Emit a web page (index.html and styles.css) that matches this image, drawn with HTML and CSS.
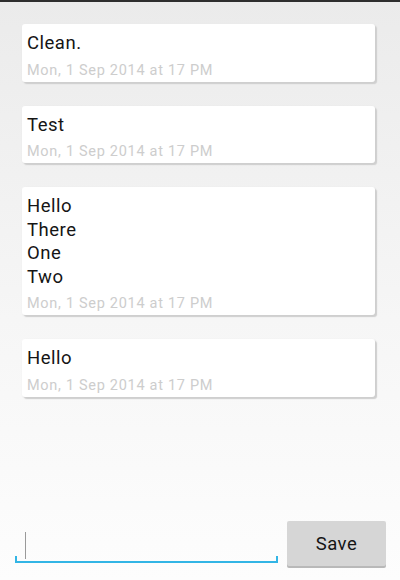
FILE: index.html
```html
<!DOCTYPE html>
<html>
<head>
<meta charset="utf-8">
<link rel="stylesheet" href="styles.css">
</head>
<body>
<div class="app">
  <div class="list">
    <div class="card">
      <div class="title">Clean.</div>
      <div class="date">Mon, 1 Sep 2014 at 17 PM</div>
    </div>
    <div class="card">
      <div class="title">Test</div>
      <div class="date">Mon, 1 Sep 2014 at 17 PM</div>
    </div>
    <div class="card">
      <div class="title">Hello<br>There<br>One<br>Two</div>
      <div class="date">Mon, 1 Sep 2014 at 17 PM</div>
    </div>
    <div class="card">
      <div class="title">Hello</div>
      <div class="date">Mon, 1 Sep 2014 at 17 PM</div>
    </div>
  </div>
  <div class="composer">
    <div class="field"><span class="caret"></span></div>
    <button class="save">Save</button>
  </div>
</div>
</body>
</html>
```
FILE: styles.css
```css
html, body {
  margin: 0;
  padding: 0;
  height: 100%;
}
body {
  font-family: Roboto, "Noto Sans", sans-serif;
  background: linear-gradient(to bottom, #ebebeb 0%, #f6f6f6 55%, #fdfdfd 100%);
  border-top: 2px solid #2e2e2e;
  box-sizing: border-box;
}
.app {
  height: 578px;
  display: flex;
  flex-direction: column;
}
.list {
  flex: 1;
  display: flex;
  flex-direction: column;
  gap: 24px;
  padding: 22px 0 0 22px;
}
.card {
  width: 353px;
  background: #fff;
  border-radius: 3px;
  box-shadow: 2px 2px 1px 0 #cfcfcf, 1px 1px 2px #dadada;
  padding: 8px 5px 1px 5px;
  box-sizing: border-box;
}
.title {
  font-size: 18.5px;
  letter-spacing: 0.5px;
  line-height: 23.5px;
  color: #151515;
}
.date {
  font-size: 14.5px;
  letter-spacing: 0.7px;
  line-height: 20px;
  margin-top: 5px;
  color: #cdcdcd;
}
.composer {
  display: flex;
  align-items: flex-start;
  gap: 9px;
  padding: 0 14px 14px 15px;
}
.field {
  width: 263px;
  height: 40px;
  margin-top: 2px;
  box-sizing: border-box;
  position: relative;
  border-bottom: 2px solid #33b5e5;
}
.field::before,
.field::after {
  content: "";
  position: absolute;
  bottom: 0;
  width: 2px;
  height: 5px;
  background: #33b5e5;
}
.field::before { left: 0; }
.field::after { right: 0; }
.caret {
  position: absolute;
  left: 10px;
  top: 9px;
  width: 1px;
  height: 27px;
  background: #9a9a9a;
}
.save {
  width: 99px;
  height: 45px;
  border: none;
  border-radius: 2px;
  background: #d6d6d6;
  box-shadow: 0 2px 0 #b9b9b9;
  font-family: Roboto, "Noto Sans", sans-serif;
  font-size: 18.5px;
  letter-spacing: 0.5px;
  color: #151515;
  padding: 0;
}
```
